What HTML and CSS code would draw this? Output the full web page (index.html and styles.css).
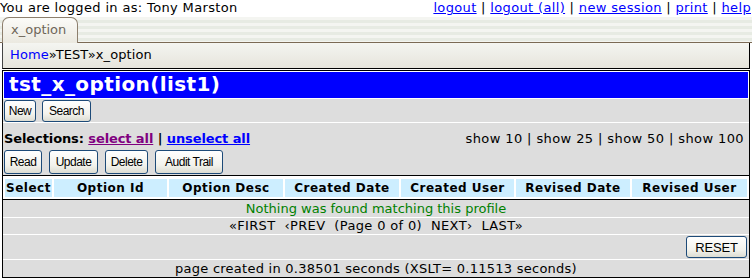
FILE: index.html
```html
<!DOCTYPE html>
<html>
<head>
<meta charset="utf-8">
<link rel="stylesheet" href="styles.css">
</head>
<body>
<div class="topbar">
  <span class="user">You are logged in as: Tony Marston</span>
  <span class="links"><a href="#">logout</a> | <a href="#">logout (all)</a> | <a href="#">new session</a> | <a href="#">print</a> | <a href="#">help</a></span>
</div>
<div class="tabbar">
  <div class="tab">x_option</div>
</div>
<div class="crumbs"><a href="#">Home</a>»TEST»x_option</div>
<div class="main">
  <div class="title">tst_x_option(list1)</div>
  <div class="row btnrow">
    <button class="btn w-new">New</button>
    <button class="btn w-search">Search</button>
  </div>
  <div class="row selblock">
    <div class="selline">
      <span class="sel"><b>Selections:</b> <a href="#" class="visited">select all</a> | <a href="#">unselect all</a></span>
      <span class="show">show 10 | show 25 | show 50 | show 100</span>
    </div>
    <div class="btns">
      <button class="btn w-read">Read</button>
      <button class="btn w-update">Update</button>
      <button class="btn w-delete">Delete</button>
      <button class="btn w-audit">Audit Trail</button>
    </div>
  </div>
  <div class="thead">
    <div class="th">Select</div>
    <div class="th">Option Id</div>
    <div class="th">Option Desc</div>
    <div class="th">Created Date</div>
    <div class="th">Created User</div>
    <div class="th">Revised Date</div>
    <div class="th">Revised User</div>
  </div>
  <div class="row msg">Nothing was found matching this profile</div>
  <div class="row pager">«FIRST&nbsp;&nbsp;‹PREV&nbsp;&nbsp;(Page 0 of 0)&nbsp;&nbsp;NEXT›&nbsp;&nbsp;LAST»</div>
  <div class="row resetrow"><button class="btn reset">RESET</button></div>
  <div class="row footer">page created in 0.38501 seconds (XSLT= 0.11513 seconds)</div>
</div>
</body>
</html>
```
FILE: styles.css
```css
* { box-sizing: border-box; }
body {
  margin: 0;
  font-family: "DejaVu Sans", Verdana, sans-serif;
  font-size: 13px;
  letter-spacing: 0.35px;
  color: #000;
  background: #fff;
}
a { color: #0000ff; }
a.visited { color: #800080; }

.topbar {
  display: flex;
  justify-content: space-between;
  height: 17px;
  line-height: 15px;
  padding: 0 1px 0 0;
}

.tabbar {
  height: 26px;
  display: flex;
  align-items: flex-end;
  border-bottom: 1px solid #7b6a55;
  background: repeating-linear-gradient(to bottom, #f4f5f1 0, #f4f5f1 3px, #e7ebe3 3px, #e7ebe3 6px);
}
.tab {
  margin-left: 2px;
  margin-bottom: -1px;
  height: 26px;
  width: 76px;
  padding-left: 8px;
  line-height: 23px;
  letter-spacing: 0;
  color: #6e6659;
  border: 1px solid #8d7f6d;
  border-bottom: none;
  border-radius: 7px 7px 0 0;
  background: linear-gradient(to bottom, #fbfbf8, #ebe9e0);
}

.crumbs {
  margin: 0 2px;
  height: 26px;
  line-height: 23px;
  padding-left: 7px;
  letter-spacing: 0.1px;
  border-left: 1px solid #444;
  border-right: 1px solid #000;
  border-bottom: 1px solid #000;
  background: linear-gradient(to bottom, #f4f5f1, #e6e4dc);
}
.crumbs a { text-decoration: none; }

.main {
  margin: 1px 2px 0;
  border: 1px solid #000;
  background: #dddddd;
}
.title {
  background: #0000ff;
  color: #fff;
  font-weight: bold;
  font-size: 20px;
  letter-spacing: 0.4px;
  height: 28px;
  line-height: 25px;
  padding-left: 5px;
  border: 1px solid #fff;
}
.row { border-bottom: 1px solid #fff; }

.btn {
  font-family: "Liberation Sans", Arial, sans-serif;
  font-size: 12px;
  letter-spacing: -0.5px;
  height: 22px;
  padding: 0;
  margin: 0;
  border: 1px solid #1d4a78;
  border-radius: 3px;
  background: linear-gradient(to bottom, #ffffff, #f2f2ec 65%, #dcdcd2);
  color: #000;
}
.w-new { width: 32px; }
.w-search { width: 49px; }
.w-read { width: 38px; }
.w-update { width: 49px; }
.w-delete { width: 43px; }
.w-audit { width: 68px; }

.btnrow {
  height: 24px;
  display: flex;
  gap: 6px;
  padding: 1px 1px 0;
}

.selblock {
  height: 52px;
  padding: 0 1px;
  border-bottom: none;
}
.selline {
  display: flex;
  justify-content: space-between;
  height: 27px;
  align-items: center;
  padding-top: 3px;
}
.sel { font-weight: bold; letter-spacing: -0.1px; }
.show { padding-right: 4px; letter-spacing: 0.4px; }
.btns {
  display: flex;
  gap: 7px;
}
.btns .btn { height: 24px; }

.thead {
  display: grid;
  grid-template-columns: 47px 113px 114px 114px 113px 114px 1fr;
  gap: 2px;
  padding: 3px 2px 2px;
  background: #fff;
  border-top: 1px solid #000;
  border-bottom: 1px solid #000;
}
.th {
  background: #cdeeff;
  font-weight: bold;
  text-align: center;
  height: 18px;
  line-height: 18px;
  font-size: 12px;
  letter-spacing: 0.5px;
}

.msg {
  height: 18px;
  line-height: 17px;
  text-align: center;
  color: #008000;
  letter-spacing: 0;
}
.pager {
  height: 17px;
  line-height: 16px;
  text-align: center;
}
.resetrow {
  height: 25px;
  display: flex;
  justify-content: flex-end;
  align-items: center;
  padding-right: 2px;
}
.reset { height: 22px; width: 61px; font-size: 13px; letter-spacing: -0.2px; }
.footer {
  height: 17px;
  line-height: 17px;
  text-align: center;
  letter-spacing: 0.25px;
  border-bottom: none;
}
```
